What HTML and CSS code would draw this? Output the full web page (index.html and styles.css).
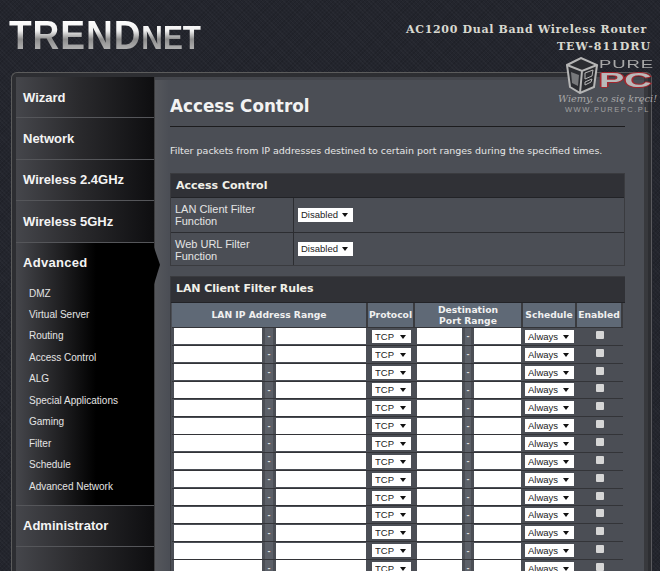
FILE: index.html
```html
<!DOCTYPE html>
<html lang="en">
<head>
<meta charset="utf-8">
<title>TRENDnet Access Control</title>
<link rel="stylesheet" href="styles.css">
</head>
<body>
<div class="page">
  <header class="top">
    <div class="logo">TREND<span class="logo-n">NET</span></div>
    <div class="model">
      <div class="model-name">AC1200 Dual Band Wireless Router</div>
      <div class="model-id">TEW-811DRU</div>
    </div>
  </header>

  <div class="mark">
    <svg class="cube" width="34" height="37" viewBox="0 0 34 37">
      <path d="M2 8 L16 1 L32 8 L29 30 L15 36 L5 30 Z" fill="#2b2c30" stroke="#b5b5b5" stroke-width="2"/>
      <path d="M2 8 L17 14 L32 8 M17 14 L15 36" fill="none" stroke="#b5b5b5" stroke-width="2"/>
      <path d="M6 15 L14 18 L13 29 L7 26 Z" fill="#77787a"/>
      <path d="M20 16 L28 13 L27 19 L20 22 Z M20 25 L27 22 L26 25 L20 28 Z" fill="none" stroke="#b5b5b5"/>
    </svg>
    <div class="mark-pure">PURE</div>
    <div class="mark-pc">PC</div>
    <div class="mark-slogan">Wiemy, co się kręci!</div>
    <div class="mark-www">WWW.PUREPC.PL</div>
  </div>

  <div class="panel">
    <nav class="side">
      <a class="nav">Wizard</a>
      <a class="nav">Network</a>
      <a class="nav">Wireless 2.4GHz</a>
      <a class="nav">Wireless 5GHz</a>
      <div class="adv">
        <div class="adv-title">Advanced</div>
        <a class="sub">DMZ</a>
        <a class="sub">Virtual Server</a>
        <a class="sub">Routing</a>
        <a class="sub">Access Control</a>
        <a class="sub">ALG</a>
        <a class="sub">Special Applications</a>
        <a class="sub">Gaming</a>
        <a class="sub">Filter</a>
        <a class="sub">Schedule</a>
        <a class="sub">Advanced Network</a>
        <i class="arrow"></i>
      </div>
      <a class="nav">Administrator</a>
      <a class="nav"></a>
    </nav>

    <main class="main">
      <h1 class="title">Access Control</h1>
      <p class="desc">Filter packets from IP addresses destined to certain port ranges during the specified times.</p>

      <section class="box">
        <h2 class="bar">Access Control</h2>
        <div class="frow">
          <div class="flabel">LAN Client Filter Function</div>
          <div class="fval"><span class="sel sel-d"><select><option>Disabled</option></select></span></div>
        </div>
        <div class="frow">
          <div class="flabel">Web URL Filter Function</div>
          <div class="fval"><span class="sel sel-d"><select><option>Disabled</option></select></span></div>
        </div>
      </section>

      <section class="box rules">
        <h2 class="bar">LAN Client Filter Rules</h2>
        <div class="grid head">
          <div class="th">LAN IP Address Range</div>
          <div class="th">Protocol</div>
          <div class="th">Destination<br>Port Range</div>
          <div class="th">Schedule</div>
          <div class="th">Enabled</div>
        </div>
        <div class="grid row"><span class="cell"><input></span><span class="dash">-</span><span class="cell"><input></span><span class="cell"><span class="sel"><select><option>TCP</option></select></span></span><span class="cell"><input></span><span class="dash">-</span><span class="cell"><input></span><span class="cell"><span class="sel"><select><option>Always</option></select></span></span><span class="cell"><i class="chk"></i></span></div>
        <div class="grid row"><span class="cell"><input></span><span class="dash">-</span><span class="cell"><input></span><span class="cell"><span class="sel"><select><option>TCP</option></select></span></span><span class="cell"><input></span><span class="dash">-</span><span class="cell"><input></span><span class="cell"><span class="sel"><select><option>Always</option></select></span></span><span class="cell"><i class="chk"></i></span></div>
        <div class="grid row"><span class="cell"><input></span><span class="dash">-</span><span class="cell"><input></span><span class="cell"><span class="sel"><select><option>TCP</option></select></span></span><span class="cell"><input></span><span class="dash">-</span><span class="cell"><input></span><span class="cell"><span class="sel"><select><option>Always</option></select></span></span><span class="cell"><i class="chk"></i></span></div>
        <div class="grid row"><span class="cell"><input></span><span class="dash">-</span><span class="cell"><input></span><span class="cell"><span class="sel"><select><option>TCP</option></select></span></span><span class="cell"><input></span><span class="dash">-</span><span class="cell"><input></span><span class="cell"><span class="sel"><select><option>Always</option></select></span></span><span class="cell"><i class="chk"></i></span></div>
        <div class="grid row"><span class="cell"><input></span><span class="dash">-</span><span class="cell"><input></span><span class="cell"><span class="sel"><select><option>TCP</option></select></span></span><span class="cell"><input></span><span class="dash">-</span><span class="cell"><input></span><span class="cell"><span class="sel"><select><option>Always</option></select></span></span><span class="cell"><i class="chk"></i></span></div>
        <div class="grid row"><span class="cell"><input></span><span class="dash">-</span><span class="cell"><input></span><span class="cell"><span class="sel"><select><option>TCP</option></select></span></span><span class="cell"><input></span><span class="dash">-</span><span class="cell"><input></span><span class="cell"><span class="sel"><select><option>Always</option></select></span></span><span class="cell"><i class="chk"></i></span></div>
        <div class="grid row"><span class="cell"><input></span><span class="dash">-</span><span class="cell"><input></span><span class="cell"><span class="sel"><select><option>TCP</option></select></span></span><span class="cell"><input></span><span class="dash">-</span><span class="cell"><input></span><span class="cell"><span class="sel"><select><option>Always</option></select></span></span><span class="cell"><i class="chk"></i></span></div>
        <div class="grid row"><span class="cell"><input></span><span class="dash">-</span><span class="cell"><input></span><span class="cell"><span class="sel"><select><option>TCP</option></select></span></span><span class="cell"><input></span><span class="dash">-</span><span class="cell"><input></span><span class="cell"><span class="sel"><select><option>Always</option></select></span></span><span class="cell"><i class="chk"></i></span></div>
        <div class="grid row"><span class="cell"><input></span><span class="dash">-</span><span class="cell"><input></span><span class="cell"><span class="sel"><select><option>TCP</option></select></span></span><span class="cell"><input></span><span class="dash">-</span><span class="cell"><input></span><span class="cell"><span class="sel"><select><option>Always</option></select></span></span><span class="cell"><i class="chk"></i></span></div>
        <div class="grid row"><span class="cell"><input></span><span class="dash">-</span><span class="cell"><input></span><span class="cell"><span class="sel"><select><option>TCP</option></select></span></span><span class="cell"><input></span><span class="dash">-</span><span class="cell"><input></span><span class="cell"><span class="sel"><select><option>Always</option></select></span></span><span class="cell"><i class="chk"></i></span></div>
        <div class="grid row"><span class="cell"><input></span><span class="dash">-</span><span class="cell"><input></span><span class="cell"><span class="sel"><select><option>TCP</option></select></span></span><span class="cell"><input></span><span class="dash">-</span><span class="cell"><input></span><span class="cell"><span class="sel"><select><option>Always</option></select></span></span><span class="cell"><i class="chk"></i></span></div>
        <div class="grid row"><span class="cell"><input></span><span class="dash">-</span><span class="cell"><input></span><span class="cell"><span class="sel"><select><option>TCP</option></select></span></span><span class="cell"><input></span><span class="dash">-</span><span class="cell"><input></span><span class="cell"><span class="sel"><select><option>Always</option></select></span></span><span class="cell"><i class="chk"></i></span></div>
        <div class="grid row"><span class="cell"><input></span><span class="dash">-</span><span class="cell"><input></span><span class="cell"><span class="sel"><select><option>TCP</option></select></span></span><span class="cell"><input></span><span class="dash">-</span><span class="cell"><input></span><span class="cell"><span class="sel"><select><option>Always</option></select></span></span><span class="cell"><i class="chk"></i></span></div>
        <div class="grid row"><span class="cell"><input></span><span class="dash">-</span><span class="cell"><input></span><span class="cell"><span class="sel"><select><option>TCP</option></select></span></span><span class="cell"><input></span><span class="dash">-</span><span class="cell"><input></span><span class="cell"><span class="sel"><select><option>Always</option></select></span></span><span class="cell"><i class="chk"></i></span></div>
      </section>
    </main>
  </div>
</div>
</body>
</html>
```
FILE: styles.css
```css
* { box-sizing: border-box; }
html, body { margin: 0; height: 100%; }
body { background: #23252d; overflow: hidden; }
.page {
  position: relative;
  width: 660px;
  height: 571px;
  overflow: hidden;
  background-color: #23252d;
  background-image: repeating-linear-gradient(45deg, rgba(255,255,255,.022) 0 1px, transparent 1px 3px), repeating-linear-gradient(-45deg, rgba(0,0,0,.10) 0 1px, transparent 1px 3px);
  font-family: "DejaVu Sans", sans-serif;
}
.top { height: 72px; display: flex; justify-content: space-between; padding: 20px 9px 0 9px; }
.logo {
  font-family: "Liberation Sans", sans-serif;
  font-weight: 700;
  font-size: 41px;
  line-height: 31px;
  height: 31px;
  letter-spacing: 1px;
  white-space: nowrap;
  transform: scaleX(.905);
  transform-origin: left top;
  background: linear-gradient(180deg, #fff 0%, #f0f0f0 35%, #8d8d8d 62%, #b8b8b8 100%);
  -webkit-background-clip: text;
  background-clip: text;
  color: transparent;
}
.logo-n { font-size: 33px; letter-spacing: 0; }
.model {
  font-family: "DejaVu Serif", serif;
  font-weight: 700;
  font-size: 11px;
  color: #d8d8d0;
  text-align: right;
  margin-top: 1px;
  line-height: 17px;
}
.model-name { letter-spacing: .68px; padding-right: 4px; }
.model-id { letter-spacing: 1px; }
.mark { position: absolute; left: 565px; top: 56px; width: 95px; height: 60px; color: #bdbdbd; z-index: 5; }
.cube { position: absolute; left: 0; top: 1px; }
.mark-pure { position: absolute; left: 34px; top: 4px; font-family: "Liberation Sans", sans-serif; font-size: 10px; line-height: 10px; letter-spacing: .5px; color: #a8a8a8; transform: scaleX(1.85); transform-origin: left top; }
.mark-pc { position: absolute; left: 34px; top: 16px; font-family: "Liberation Sans", sans-serif; font-weight: 700; font-size: 21px; line-height: 16px; color: #b9b9b9; text-shadow: 1px 0 0 #a3262e, -1px 0 0 #a3262e, 0 1px 0 #a3262e, 0 -1px 0 #a3262e; transform: scaleX(1.8); transform-origin: left top; }
.mark-slogan { position: absolute; left: -7px; top: 37px; font-family: "DejaVu Serif", serif; font-style: italic; font-size: 9.8px; line-height: 11px; white-space: nowrap; color: #a8a8a8; }
.mark-www { position: absolute; left: 0; top: 50px; font-family: "Liberation Sans", sans-serif; font-size: 7.5px; line-height: 8px; letter-spacing: 1.5px; color: #a0a0a0; white-space: nowrap; }

.panel {
  display: flex;
  width: 641px;
  height: 520px;
  margin-left: 11px;
  padding: 4px 0 0 4px;
  background: #2d2e32;
  border: 1px solid #5c5c5c;
  border-bottom: 0;
  border-radius: 6px 6px 0 0;
  border-right: 1px solid #5a5a5e;
}
.side { width: 139px; flex: none; border-right: 1px solid #3c3c3e; }
.nav {
  display: block;
  height: 41.4px;
  padding: 12.5px 0 0 7px;
  font-family: "Liberation Sans", sans-serif;
  font-weight: 700;
  font-size: 13px;
  line-height: 15px;
  color: #f4f4f4;
  background: linear-gradient(90deg, #45464b 0%, #2a2a2d 45%, #0e0e10 100%);
  border-bottom: 1px solid #55565a;
}
.adv {
  position: relative;
  height: 263px;
  background: linear-gradient(90deg, #45464b 0%, #1c1c1e 35%, #000 58%, #000 100%);
  border-bottom: 1px solid #55565a;
  padding: 12px 0 0 7px;
}
.adv-title { font-family: "Liberation Sans", sans-serif; font-weight: 700; font-size: 13px; line-height: 15px; color: #f4f4f4; letter-spacing: .3px; margin-bottom: 13px; }
.sub { display: block; height: 21.45px; padding-left: 6px; font-family: "Liberation Sans", sans-serif; font-size: 10px; line-height: 21px; color: #e4e4e4; }
.arrow { position: absolute; left: 137px; top: 2px; width: 7px; height: 43px; background: #000; clip-path: polygon(0 0, 100% 47%, 0 100%); }

.main {
  width: 493px;
  flex: none;
  background: linear-gradient(90deg, #55575c 0, #4b4e55 14px);
  padding: 16px 0 0 15px;
  box-shadow: inset 0 3px 0 #44464c;
  border-right: 4px solid #38393d;
}
.title { margin: 0; padding-bottom: 7px; font-size: 16.8px; line-height: 26px; font-weight: 700; color: #f2f2f2; border-bottom: 1px solid #1c1c1e; width: 455px; }
.desc { margin: 17px 0 0; font-size: 9.5px; line-height: 14px; color: #e6e6e6; white-space: nowrap; }
.box { width: 455px; margin-top: 15px; border: 1px solid #3a3b3f; }
.rules { margin-top: 10px; border-right: 0; border-bottom: 0; }
.bar { margin: 0; height: 24px; padding: 0 5px; font-size: 11px; line-height: 23px; font-weight: 700; color: #f0f0e8; background: #303136; border-bottom: 1px solid #222327; }
.rules .bar { height: 26px; line-height: 24px; letter-spacing: -.1px; }
.frow { display: flex; height: 33.5px; border-top: 1px solid #2c2d31; }
.frow:first-of-type { border-top: 0; }
.flabel { width: 123px; padding: 5px 0 0 4px; font-family: "Liberation Sans", sans-serif; font-size: 11px; line-height: 12px; color: #e4e4e4; border-right: 1px solid #2c2d31; }
.fval { flex: 1; display: flex; align-items: center; padding-left: 4px; }

.sel { position: relative; display: block; height: 13px; width: 47px; background: #fff; }
.sel-d { width: 55px; height: 14px; }
.sel::after { content: ""; position: absolute; right: 5px; top: 5px; border: 3px solid transparent; border-top: 4px solid #111; border-bottom: 0; }
select { appearance: none; -webkit-appearance: none; display: block; width: 100%; height: 100%; padding: 0 0 0 3px; margin: 0; border: 0; border-radius: 0; background: transparent; font-family: "Liberation Sans", sans-serif; font-size: 9.5px; line-height: 13px; color: #222; }

.grid { display: grid; margin-left: 1px; grid-template-columns: 92px 10px 94px 47px 49px 8px 51px 54px 46px; }
.head { height: 24px; grid-template-columns: 196px 47px 108px 54px 46px; }
.th { display: flex; align-items: center; justify-content: center; text-align: center; background: #5f6976; color: #f0f0f0; font-size: 9.2px; line-height: 11.5px; font-weight: 700; border-right: 2px solid #3a3b3f; white-space: nowrap; }
.row { height: 17.85px; }
.cell, .dash { display: flex; align-items: center; justify-content: center; border: 1px solid #333438; border-width: 1px 0 0 0; }
.cell { padding: 0 2px; }
.row .cell:nth-child(4) { padding: 0 4px; }
.row .cell:nth-child(8) { padding: 0 3px 0 2px; }
.dash { background: #5c6068; background-clip: content-box; padding: 0 1px; color: #ddd; font-size: 9px; font-family: "Liberation Sans", sans-serif; font-weight: 700; }
input { display: block; width: 100%; height: 16px; padding: 0; border: 0; border-radius: 0; background: #fff; }
.chk { display: block; width: 8px; height: 8px; margin-bottom: 3px; background: #d6d6d6; border-radius: 1px; }
.row .sel { width: 100%; }
```
